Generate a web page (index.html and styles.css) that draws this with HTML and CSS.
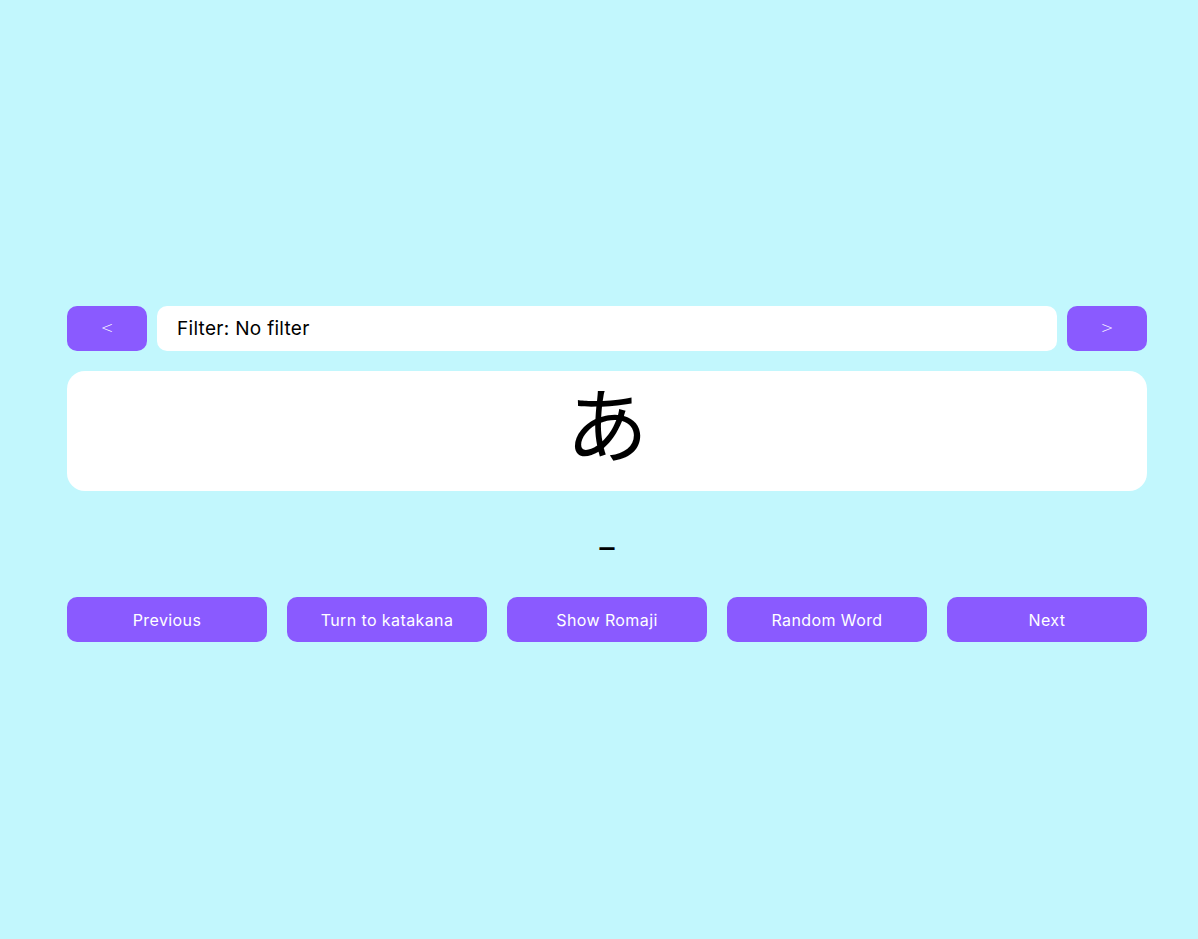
FILE: index.html
```html
<!DOCTYPE html>
<html lang="en">
<head>
<meta charset="utf-8">
<title>Kana</title>
<link rel="stylesheet" href="styles.css">
</head>
<body>
<main class="app">
  <div class="filter-row">
    <button class="arrow">&lt;</button>
    <div class="filter">Filter: No filter</div>
    <button class="arrow">&gt;</button>
  </div>
  <div class="card"><span class="kana">あ</span></div>
  <div class="romaji">–</div>
  <div class="actions">
    <button class="btn">Previous</button>
    <button class="btn">Turn to katakana</button>
    <button class="btn">Show Romaji</button>
    <button class="btn">Random Word</button>
    <button class="btn">Next</button>
  </div>
</main>
</body>
</html>
```
FILE: styles.css
```css
html, body {
  margin: 0;
  padding: 0;
  background: #c2f7fd;
  height: 100%;
}
body {
  font-family: "Inter", "Noto Sans", sans-serif;
  padding-left: 16px;
  box-sizing: border-box;
}
.app {
  width: 1080px;
  margin: 0 auto;
  padding-top: 306px;
  display: flex;
  flex-direction: column;
}
.filter-row {
  display: flex;
  gap: 10px;
  height: 45px;
}
.arrow {
  width: 80px;
  border: none;
  border-radius: 10px;
  background: #8a5aff;
  color: #fff;
  font-family: "DejaVu Sans", sans-serif;
  font-weight: 200;
  font-size: 15px;
  padding: 0 0 2px;
}
.filter {
  flex: 1;
  background: #fff;
  border-radius: 10px;
  display: flex;
  align-items: center;
  padding-left: 20px;
  font-size: 19px;
  letter-spacing: 0.3px;
  color: #000;
}
.card {
  margin-top: 20px;
  height: 120px;
  background: #fff;
  border-radius: 18px;
  display: flex;
  justify-content: center;
  align-items: center;
}
.kana {
  font-family: "Noto Sans CJK JP", sans-serif;
  font-size: 82px;
  line-height: 1;
  color: #000;
  margin-top: -20px;
}
.romaji {
  height: 106px;
  display: flex;
  justify-content: center;
  align-items: center;
  font-size: 36px;
  color: #000;
  font-family: "Noto Sans", sans-serif;
}
.actions {
  display: flex;
  gap: 20px;
}
.btn {
  width: 200px;
  height: 45px;
  border: none;
  border-radius: 10px;
  background: #8a5aff;
  color: #fff;
  font-family: "Inter", "Noto Sans", sans-serif;
  font-size: 16px;
  letter-spacing: 0.4px;
  padding: 0;
}
```
